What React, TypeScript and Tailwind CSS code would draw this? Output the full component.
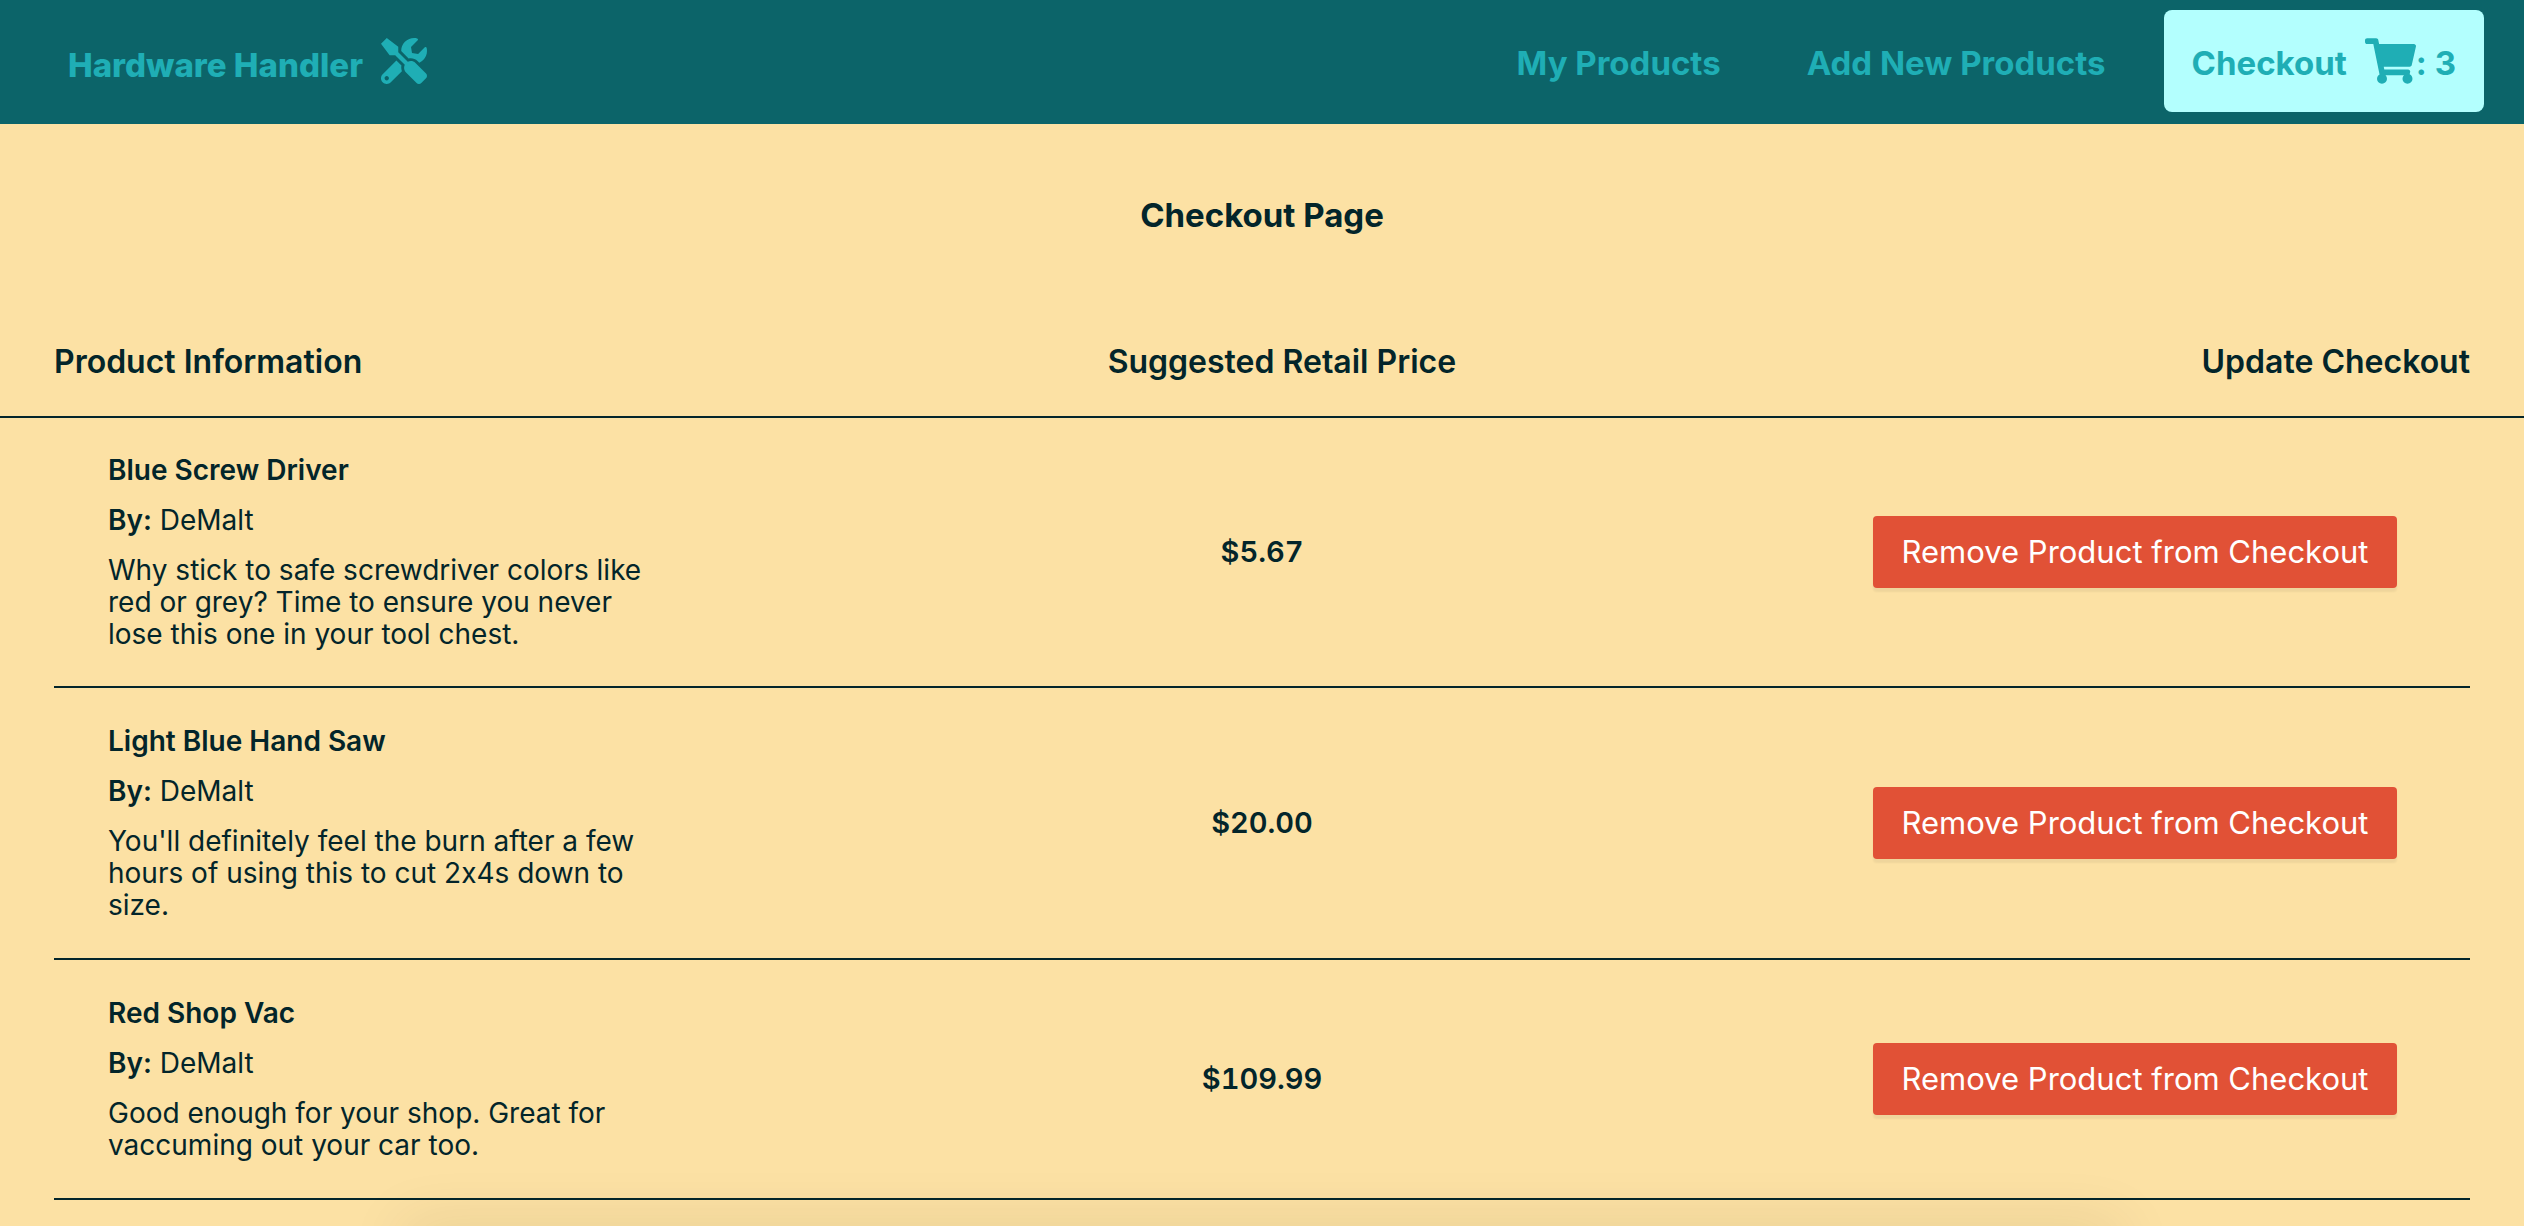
import { FaShoppingCart, FaTools } from "react-icons/fa";

type Product = { name: string; brand: string; description: string; price: string };

const products: Product[] = [
  {
    name: "Blue Screw Driver",
    brand: "DeMalt",
    description:
      "Why stick to safe screwdriver colors like red or grey? Time to ensure you never lose this one in your tool chest.",
    price: "$5.67",
  },
  {
    name: "Light Blue Hand Saw",
    brand: "DeMalt",
    description: "You'll definitely feel the burn after a few hours of using this to cut 2x4s down to size.",
    price: "$20.00",
  },
  {
    name: "Red Shop Vac",
    brand: "DeMalt",
    description: "Good enough for your shop. Great for vaccuming out your car too.",
    price: "$109.99",
  },
];

function Header() {
  return (
    <header className="flex items-center justify-between bg-[#0c6469] pt-2.5 pr-10 pb-3 pl-[68px] text-[33px] leading-10 font-bold text-[#1faeb5]">
      <a href="#" className="flex items-center gap-[18px]">
        <span className="pt-2 font-extrabold">Hardware Handler</span>
        <FaTools className="size-[46px]" />
      </a>
      <nav className="flex items-center gap-[30px]">
        <a href="#products" className="px-7 pt-1">
          My Products
        </a>
        <a href="#add" className="px-7 pt-1">
          Add New Products
        </a>
        <a href="#checkout" className="flex h-[102px] items-center rounded-lg bg-[#b3fffe] px-7">
          <span className="pt-1">Checkout</span>
          <FaShoppingCart className="ml-[18px] h-[46px] w-[51px]" />
          <span className="pt-1">: 3</span>
        </a>
      </nav>
    </header>
  );
}

function ProductRow({ product }: { product: Product }) {
  return (
    <tr className="grid grid-cols-[670fr_1076fr_670fr] items-center border-b-2 border-[#03252a] py-[37px] first:py-9">
      <td className="px-[54px] text-[28px] leading-8">
        <h3 className="font-semibold">{product.name}</h3>
        <p className="mt-[18px]">
          <span className="font-semibold">By:</span> {product.brand}
        </p>
        <p className="mt-[18px]">{product.description}</p>
      </td>
      <td className="text-center text-[29px] leading-8 font-semibold tabular-nums">{product.price}</td>
      <td className="text-center">
        <button
          type="button"
          className="h-[72px] rounded-sm bg-[#e15136] px-[29px] text-[31px] leading-10 whitespace-nowrap text-white shadow-[0_4px_2px_rgba(34,36,38,0.06)]"
        >
          Remove Product from Checkout
        </button>
      </td>
    </tr>
  );
}

export default function App() {
  return (
    <div className="relative min-h-screen overflow-hidden bg-[#fce1a4] font-['Inter',sans-serif] text-[#03252a] [font-feature-settings:'calt'_0]">
      <Header />
      <main>
        <h1 className="pt-[71px] text-center text-[33px] leading-10 font-bold">Checkout Page</h1>
        <table className="mt-[89px] block">
          <thead className="block border-b-2 border-[#03252a] px-[54px] pt-[18px] pb-[34px]">
            <tr className="flex justify-between text-[32px] leading-10">
              <th className="font-semibold">Product Information</th>
              <th className="font-semibold">Suggested Retail Price</th>
              <th className="font-semibold">Update Checkout</th>
            </tr>
          </thead>
          <tbody className="block px-[54px]">
            {products.map((product) => (
              <ProductRow key={product.name} product={product} />
            ))}
          </tbody>
        </table>
      </main>
      <div className="pointer-events-none absolute top-full right-[16%] left-[16%] h-10 shadow-[0_0_60px_rgba(60,50,0,0.12)]" />
    </div>
  );
}
